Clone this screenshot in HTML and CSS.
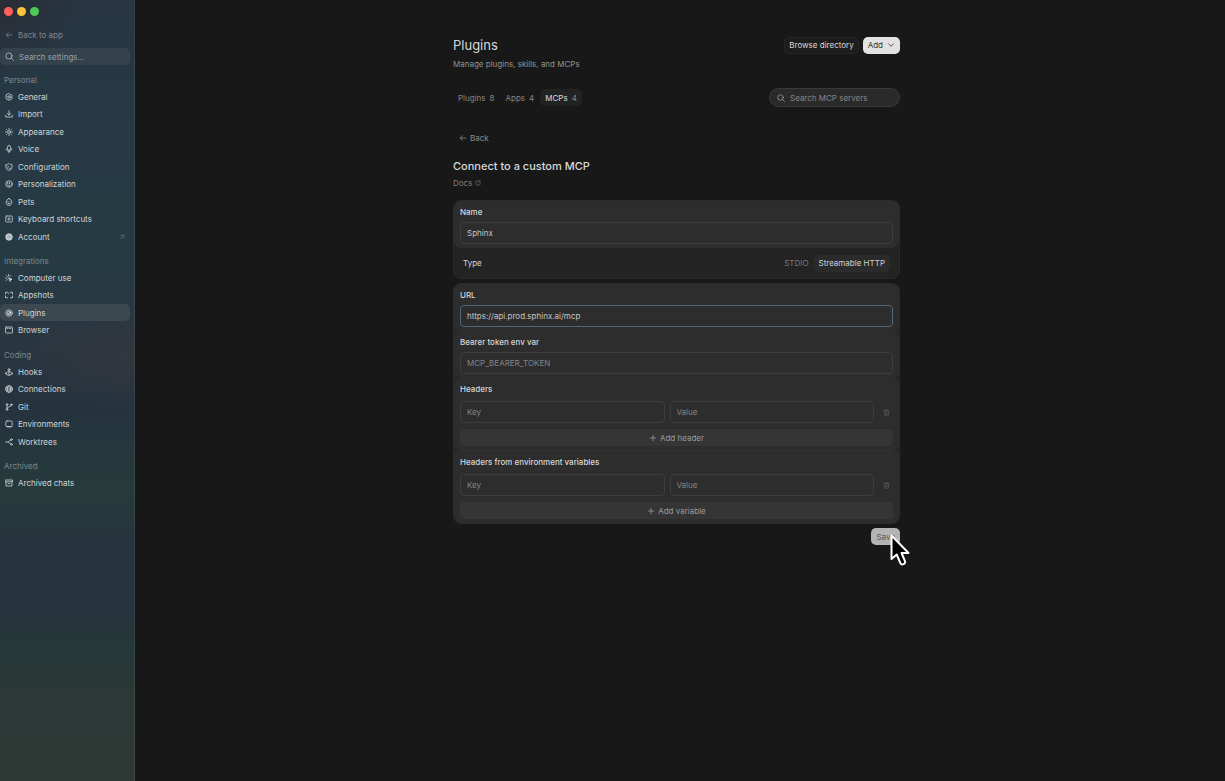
FILE: index.html
```html
<!DOCTYPE html>
<html lang="en">
  <head>
    <meta charset="UTF-8" />
    <title>Plugins</title>
    <link rel="stylesheet" href="styles.css">
  </head>
  <body>
    <svg class="sprite" aria-hidden="true">
      <symbol id="arrow-left" viewBox="0 0 16 16"><path d="M14 8H2.5M7 3.5 2.5 8 7 12.500" /></symbol>
      <symbol id="arrow-out" viewBox="0 0 16 16"><path d="M3 13 13 3M5 3h8v8" /></symbol>
      <symbol id="search" viewBox="0 0 16 16"><circle cx="7" cy="7" r="5.500" /><path d="m11 11 4 4" /></symbol>
      <symbol id="general" viewBox="0 0 16 16"><path d="M8 1.200 13.800 4.500v7L8 14.800 2.200 11.500v-7z" /><circle cx="8" cy="8" r="2.500" /></symbol>
      <symbol id="import" viewBox="0 0 16 16"><path d="M8 1.500v8.500M4.800 7 8 10.200 11.200 7M1.500 10.500V14h13v-3.500" /></symbol>
      <symbol id="sun" viewBox="0 0 16 16"><circle cx="8" cy="8" r="2.800" /><path d="M8 .8v2M8 13.200v2M.8 8h2M13.200 8h2M2.900 2.900l1.400 1.400M11.700 11.700l1.400 1.400M2.900 13.100l1.400-1.400M11.700 4.300l1.400-1.400" /></symbol>
      <symbol id="mic" viewBox="0 0 16 16"><rect x="5" y="1" width="6" height="9.500" rx="3" /><path d="M2.500 7.500c0 7 11 7 11 0M8 12.800V15.500" /></symbol>
      <symbol id="config" viewBox="0 0 16 16"><path d="M2 3.500C5 3.500 6 1.500 8 1.500s3 2 6 2V9c0 3-3 5.500-6 5.500S2 12 2 9z" /><path d="m5 6 2 2-2 2M8.500 10.500H11" /></symbol>
      <symbol id="person" viewBox="0 0 16 16"><circle cx="8" cy="8" r="6.500" /><path d="M5.500 5v3M9 5v2.500M5.500 10.500c2 1.800 4 1.300 5.300-.5" /></symbol>
      <symbol id="pet" viewBox="0 0 16 16"><path d="M8 1.200c3 0 5.600 4.300 5.600 7.800 0 3.300-2.500 5.800-5.600 5.800S2.400 12.300 2.400 9C2.400 5.500 5 1.200 8 1.200z" /><path d="M5.800 7.500v1M10.200 7.500v1M6.500 11h3" /></symbol>
      <symbol id="keyboard" viewBox="0 0 16 16"><rect x="1.500" y="2" width="13" height="12" rx="1.500" /><path d="M8 5.500v5M5.500 8h5" /></symbol>
      <symbol id="gear" viewBox="0 0 16 16"><circle class="fill" cx="8" cy="8" r="6.500" /><circle class="cut" cx="8" cy="8" r="4" /><path class="cut" d="M8 6v4M6 8h4" /></symbol>
      <symbol id="click" viewBox="0 0 16 16"><path d="M7 1v3M2.500 3l2 2M1 8h3M11.500 3l-2 2M4.500 11l-2 2" /><path class="fill" d="m8 8 6 2.500-2.500 1L10.500 14z" /></symbol>
      <symbol id="shots" viewBox="0 0 16 16"><path d="M1 6V2.500h4M11 2.500h4V6M15 10v3.500h-4M5 13.500H1V10M6.500 4.500h1.500" /></symbol>
      <symbol id="plugin" viewBox="0 0 16 16"><circle cx="8" cy="8" r="6.500" /><circle cx="8" cy="8" r="3.500" /><path d="M6 10l4-4M8 8h3" /></symbol>
      <symbol id="browser" viewBox="0 0 16 16"><rect x="1" y="2" width="14" height="12" rx="1.500" /><path d="M4 4.800h1.500M8 4.800h4" /></symbol>
      <symbol id="anchor" viewBox="0 0 16 16"><circle cx="8" cy="3" r="1.800" /><path d="M8 5v9M5 7.500h6M1.800 9.500v2c0 3.600 12.400 3.600 12.400 0v-2M1 11l.8-1.500 1.700 1M15 11l-.8-1.500-1.700 1" /></symbol>
      <symbol id="globe" viewBox="0 0 16 16"><circle cx="8" cy="8" r="6.800" /><ellipse cx="8" cy="8" rx="3" ry="6.800" /><path d="M1.500 6h13M1.500 10h13" /></symbol>
      <symbol id="branch" viewBox="0 0 16 16"><circle cx="4" cy="3" r="1.700" /><circle cx="4" cy="13" r="1.700" /><circle cx="12.500" cy="3.500" r="1.700" /><path d="M4 5v6M12.500 5.200c0 3.500-8.500 1.500-8.500 5" /></symbol>
      <symbol id="laptop" viewBox="0 0 16 16"><rect x="1.500" y="2" width="13" height="11" rx="2.500" /><path d="M4 13.800h8" /></symbol>
      <symbol id="tree" viewBox="0 0 16 16"><circle cx="12.800" cy="3.200" r="1.700" /><circle cx="12.800" cy="12.800" r="1.700" /><path d="M1 8h5.500l4.800-4M6.500 8l4.800 4" /></symbol>
      <symbol id="archive" viewBox="0 0 16 16"><path d="M1 2h14v3.500H1zM2 5.500V14h12V5.500M6 9h4" /></symbol>
      <symbol id="chevron" viewBox="0 0 16 16"><path d="m3 5.500 5 5 5-5" /></symbol>
      <symbol id="external" viewBox="0 0 16 16"><path d="M7 2.500H4.500a2 2 0 0 0-2 2v7a2 2 0 0 0 2 2h7a2 2 0 0 0 2-2V9M10 2.500h3.500V6M13.500 2.500 10 6" /></symbol>
      <symbol id="plus" viewBox="0 0 16 16"><path d="M8 2.500v11M2.500 8h11" /></symbol>
      <symbol id="trash" viewBox="0 0 16 16"><path d="M1.500 4h13M5 4l.8-2.500h4.400L11 4M3 4l.7 10.500h8.600L13 4M6.500 7v4.500M9.500 7v4.500" /></symbol>
    </svg>

    <aside class="sidebar">
      <div class="lights"><span class="red"></span><span class="yellow"></span><span class="green"></span></div>
      <a href="#" class="nav-link back-app"><svg class="icon"><use href="#arrow-left" /></svg>Back to app</a>
      <label class="settings-search">
        <svg class="icon"><use href="#search" /></svg>
        <input type="search" placeholder="Search settings..." aria-label="Search settings" />
      </label>
      <nav>
        <h3>Personal</h3>
        <ul>
          <li><a href="#" class="nav-link"><svg class="icon"><use href="#general" /></svg>General</a></li>
          <li><a href="#" class="nav-link"><svg class="icon"><use href="#import" /></svg>Import</a></li>
          <li><a href="#" class="nav-link"><svg class="icon"><use href="#sun" /></svg>Appearance</a></li>
          <li><a href="#" class="nav-link"><svg class="icon"><use href="#mic" /></svg>Voice</a></li>
          <li><a href="#" class="nav-link"><svg class="icon"><use href="#config" /></svg>Configuration</a></li>
          <li><a href="#" class="nav-link"><svg class="icon"><use href="#person" /></svg>Personalization</a></li>
          <li><a href="#" class="nav-link"><svg class="icon"><use href="#pet" /></svg>Pets</a></li>
          <li><a href="#" class="nav-link"><svg class="icon"><use href="#keyboard" /></svg>Keyboard shortcuts</a></li>
          <li><a href="#" class="nav-link"><svg class="icon"><use href="#gear" /></svg>Account<svg class="icon out"><use href="#arrow-out" /></svg></a></li>
        </ul>
        <h3>Integrations</h3>
        <ul>
          <li><a href="#" class="nav-link"><svg class="icon"><use href="#click" /></svg>Computer use</a></li>
          <li><a href="#" class="nav-link"><svg class="icon"><use href="#shots" /></svg>Appshots</a></li>
          <li><a href="#" class="nav-link active"><svg class="icon"><use href="#plugin" /></svg>Plugins</a></li>
          <li><a href="#" class="nav-link"><svg class="icon"><use href="#browser" /></svg>Browser</a></li>
        </ul>
        <h3>Coding</h3>
        <ul>
          <li><a href="#" class="nav-link"><svg class="icon"><use href="#anchor" /></svg>Hooks</a></li>
          <li><a href="#" class="nav-link"><svg class="icon"><use href="#globe" /></svg>Connections</a></li>
          <li><a href="#" class="nav-link"><svg class="icon"><use href="#branch" /></svg>Git</a></li>
          <li><a href="#" class="nav-link"><svg class="icon"><use href="#laptop" /></svg>Environments</a></li>
          <li><a href="#" class="nav-link"><svg class="icon"><use href="#tree" /></svg>Worktrees</a></li>
        </ul>
        <h3>Archived</h3>
        <ul>
          <li><a href="#" class="nav-link"><svg class="icon"><use href="#archive" /></svg>Archived chats</a></li>
        </ul>
      </nav>
    </aside>

    <main>
      <div class="content">
        <header class="page-header">
          <h1>Plugins</h1>
          <div class="actions">
            <button type="button" class="btn dark">Browse directory</button>
            <button type="button" class="btn light">Add <svg class="icon"><use href="#chevron" /></svg></button>
          </div>
        </header>
        <p class="subtitle">Manage plugins, skills, and MCPs</p>

        <div class="toolbar">
          <div class="tabs">
            <button type="button" class="tab">Plugins <span>8</span></button>
            <button type="button" class="tab">Apps <span>4</span></button>
            <button type="button" class="tab active">MCPs <span>4</span></button>
          </div>
          <label class="server-search">
            <svg class="icon"><use href="#search" /></svg>
            <input type="search" placeholder="Search MCP servers" aria-label="Search MCP servers" />
          </label>
        </div>

        <a href="#" class="back"><svg class="icon"><use href="#arrow-left" /></svg>Back</a>
        <h2>Connect to a custom MCP</h2>
        <a href="#" class="docs">Docs <svg class="icon"><use href="#external" /></svg></a>

        <form>
          <div class="card">
            <div class="section">
              <label for="name">Name</label>
              <input class="field" type="text" id="name" value="Sphinx" />
            </div>
            <div class="type-row">
              <span>Type</span>
              <div class="types">
                <button type="button" class="type">STDIO</button>
                <button type="button" class="type active">Streamable HTTP</button>
              </div>
            </div>
          </div>

          <div class="card details">
            <div class="section">
              <label for="url">URL</label>
              <input class="field focused" type="text" id="url" value="https://api.prod.sphinx.ai/mcp" />
            </div>
            <div class="section">
              <label for="token">Bearer token env var</label>
              <input class="field" type="text" id="token" placeholder="MCP_BEARER_TOKEN" />
            </div>
            <div class="section pairs">
              <h4>Headers</h4>
              <div class="pair">
                <input class="field" type="text" placeholder="Key" aria-label="Header key" />
                <input class="field" type="text" placeholder="Value" aria-label="Header value" />
                <button type="button" class="remove" aria-label="Remove header"><svg class="icon"><use href="#trash" /></svg></button>
              </div>
              <button type="button" class="add-row"><svg class="icon"><use href="#plus" /></svg>Add header</button>
            </div>
            <div class="section pairs">
              <h4>Headers from environment variables</h4>
              <div class="pair">
                <input class="field" type="text" placeholder="Key" aria-label="Variable key" />
                <input class="field" type="text" placeholder="Value" aria-label="Variable value" />
                <button type="button" class="remove" aria-label="Remove variable"><svg class="icon"><use href="#trash" /></svg></button>
              </div>
              <button type="button" class="add-row"><svg class="icon"><use href="#plus" /></svg>Add variable</button>
            </div>
          </div>

          <div class="save-row">
            <button type="submit" class="btn save">Save</button>
            <svg class="pointer" viewBox="0 0 20 34" aria-hidden="true">
              <path d="M1.500 1.500V25l5.200-4.500 3.600 8.300c1.200 3 5.800 1.300 4.600-1.800L11.500 19H18.500z" />
            </svg>
          </div>
        </form>
      </div>
    </main>
  </body>
</html>
```
FILE: styles.css
```css
* {
  box-sizing: border-box;
}
body {
  margin: 0;
  min-height: 100vh;
  display: flex;
  background-color: #181818;
  color: #d8d8d8;
  font-family: Inter, "Liberation Sans", sans-serif;
  font-size: 8px;
  line-height: 12px;
}
h1,
h2,
h3,
h4,
p,
ul {
  margin: 0;
  padding: 0;
}
a {
  color: inherit;
  text-decoration: none;
}
button,
input {
  font: inherit;
  color: inherit;
  border: none;
  background: none;
  margin: 0;
  padding: 0;
  outline: none;
}
button {
  display: flex;
  align-items: center;
  justify-content: center;
  cursor: pointer;
}
input::placeholder {
  color: #858585;
  opacity: 1;
}
.sprite {
  position: absolute;
  width: 0;
  height: 0;
}
.icon {
  flex: none;
  width: 8px;
  height: 8px;
  fill: none;
  stroke: currentColor;
  stroke-width: 1.6;
  stroke-linecap: round;
  stroke-linejoin: round;
}
.fill {
  fill: currentColor;
}
.cut {
  stroke: #87939a;
  stroke-width: 1;
}

/* Sidebar */
.sidebar {
  width: 135px;
  flex: none;
  padding: 7px 4px 0 0;
  border-right: 1px solid rgba(255, 255, 255, 0.07);
  background:
    radial-gradient(circle at 0 0, #292c34 0, rgba(41, 44, 52, 0) 80px),
    radial-gradient(ellipse 110px 50px at 134px 358px, #33363e 0, rgba(51, 54, 62, 0) 100%),
    linear-gradient(#273642 0, #263945 120px, #263a43 260px, #2a3640 350px, #25333e 410px, #263a3c 480px, #263a3c 500px, #26343d 540px, #26343d 610px, #253938 655px, #2b3836 690px, #2e3835 781px);
}
.lights {
  display: flex;
  gap: 4px;
  padding-left: 4px;
  margin-bottom: 10px;
}
.lights span {
  width: 9px;
  height: 9px;
  border-radius: 50%;
}
.red {
  background-color: #ff5f5e;
}
.yellow {
  background-color: #fcc43a;
}
.green {
  background-color: #4dc759;
}
.nav-link {
  display: flex;
  align-items: center;
  gap: 5px;
  height: 17px;
  padding: 0 5px;
  border-radius: 5px;
  color: #cfd5d8;
}
.nav-link.active {
  background-color: #3c484f;
}
.nav-link .out {
  margin-left: auto;
  width: 6px;
  height: 6px;
  color: #6f7d84;
}
.back-app {
  color: #7f888f;
}
.settings-search {
  display: flex;
  align-items: center;
  gap: 5px;
  height: 17px;
  margin: 5px 0 6px;
  padding: 0 5px;
  border-radius: 5px;
  background-color: #34424c;
  color: #a9b2b7;
}
.settings-search .icon {
  width: 9px;
  height: 9px;
}
.settings-search input {
  min-width: 0;
  flex: 1;
}
.settings-search input::placeholder {
  color: #98a2a8;
}
nav {
  display: flex;
  flex-direction: column;
}
nav h3 {
  padding: 1px 0 0 4px;
  font-size: 8px;
  font-weight: 400;
  line-height: 16px;
  color: #7b888e;
}
nav ul {
  list-style: none;
  margin-bottom: 7px;
}
nav li {
  height: 17px;
}
nav li:nth-child(even) {
  height: 18px;
}

/* Main column */
main {
  flex: 1;
  padding: 36px 21px 0 14px;
}
.content {
  max-width: 447px;
  margin: 0 auto;
}
.page-header {
  display: flex;
  justify-content: space-between;
  align-items: center;
}
h1 {
  font-size: 13px;
  font-weight: 400;
  line-height: 18px;
}
.actions {
  display: flex;
  gap: 4px;
}
.btn {
  height: 17px;
  padding: 0 4px;
  border: 1px solid transparent;
  border-radius: 5px;
}
.dark {
  background-color: #1d1d1d;
  border-color: #262626;
}
.light {
  gap: 4px;
  background-color: #e2e2e2;
  color: #333;
}
.subtitle {
  margin-top: 4px;
  color: #929292;
}
.toolbar {
  display: flex;
  justify-content: space-between;
  align-items: center;
  margin-top: 18px;
}
.tabs {
  display: flex;
  gap: 1px;
}
.tab {
  gap: 4px;
  height: 17px;
  padding: 0 5px;
  border-radius: 5px;
  color: #858585;
}
.tab span {
  color: #858585;
}
.tab.active {
  background-color: #222;
  color: #dcdcdc;
}
.server-search {
  display: flex;
  align-items: center;
  gap: 5px;
  width: 131px;
  height: 19px;
  padding: 0 7px;
  border: 1px solid #3a3a3a;
  border-radius: 10px;
  background-color: #2a2a2a;
  color: #999;
}
.server-search input {
  min-width: 0;
  flex: 1;
}
.back {
  display: flex;
  align-items: center;
  gap: 3px;
  margin: 25px 0 0 6px;
  color: #8c8c8c;
}
h2 {
  margin-top: 14px;
  font-size: 11px;
  font-weight: 500;
  line-height: 16px;
}
.docs {
  display: flex;
  align-items: center;
  gap: 3px;
  margin-top: 3px;
  color: #808080;
}
.docs .icon {
  width: 6px;
  height: 6px;
}

/* Form */
form {
  margin-top: 11px;
}
.card {
  margin-bottom: 4px;
  border: 1px solid #2b2b2b;
  border-radius: 8px;
  background-color: #232323;
}
.details {
  background-color: #272727;
}
.section {
  padding: 5px 6px 4px;
  border-radius: 7px;
  background-color: #2d2d2d;
}
.section label,
.section h4 {
  display: block;
  margin-bottom: 4px;
  font-size: 8px;
  font-weight: 500;
}
.section.pairs h4 {
  margin-bottom: 6px;
}
.pairs + .pairs {
  border-top: 1px solid #323232;
}
.field {
  display: block;
  width: 100%;
  height: 22px;
  padding: 0 6px;
  border: 1px solid #3d3d3d;
  border-radius: 4px;
  color: #c4c4c4;
}
.field.focused {
  border-color: #49677e;
}
.type-row {
  display: flex;
  align-items: center;
  justify-content: space-between;
  height: 30px;
  padding: 0 9px;
}
.types {
  display: flex;
}
.type {
  height: 17px;
  padding: 0 5px;
  border-radius: 5px;
  color: #7a7a7a;
}
.type.active {
  background-color: #2b2b2b;
  color: #d0d0d0;
}
.pair {
  display: flex;
  align-items: center;
  gap: 5px;
}
.pair .field {
  flex: 1;
  min-width: 0;
}
.remove {
  width: 14px;
  height: 14px;
  color: #5a5a5a;
}
.remove .icon {
  width: 7px;
  height: 7px;
}
.add-row {
  gap: 3px;
  width: 100%;
  height: 17px;
  margin-top: 6px;
  border-radius: 4px;
  background-color: #353535;
  color: #9b9b9b;
}
.save-row {
  position: relative;
  display: flex;
  justify-content: flex-end;
}
.save {
  background-color: #b4b4b4;
  color: #555;
}
/* Mouse pointer resting over the save button */
.pointer {
  position: absolute;
  top: 6px;
  right: -10px;
  width: 20px;
  height: 34px;
  fill: #000;
  stroke: #fff;
  stroke-width: 2;
  stroke-linejoin: round;
}
```
